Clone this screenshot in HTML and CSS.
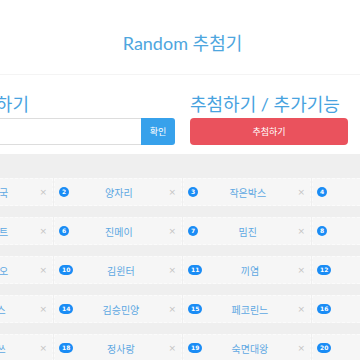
FILE: index.html
```html
<!DOCTYPE html>
<html lang="ko">
<head>
    <meta charset="UTF-8">
    <meta name="viewport" content="width=device-width, initial-scale=1.0">
    <title>Random 추첨기</title>
    <link rel="stylesheet" href="styles.css">
</head>
<body>

<div class="page">
    <header class="top">
        <h1>Random 추첨기</h1>
    </header>

    <div class="controls">
        <div class="col col-left">
            <h2>이름 입력하기</h2>
            <div class="input-group">
                <input type="text" id="nameInput">
                <button class="btn-ok">확인</button>
            </div>
        </div>
        <div class="col col-right">
            <h2>추첨하기 / 추가기능</h2>
            <button class="btn-draw">추첨하기</button>
        </div>
    </div>

    <div class="board">
        <div class="grid">
            <div class="card"><span class="num">1</span><span class="name">한나라국</span><span class="del">×</span></div>
            <div class="card"><span class="num">2</span><span class="name">양자리</span><span class="del">×</span></div>
            <div class="card"><span class="num">3</span><span class="name">작은박스</span><span class="del">×</span></div>
            <div class="card"><span class="num">4</span><span class="name">별사탕</span><span class="del">×</span></div>

            <div class="card"><span class="num">5</span><span class="name">도레미트</span><span class="del">×</span></div>
            <div class="card"><span class="num">6</span><span class="name">진메이</span><span class="del">×</span></div>
            <div class="card"><span class="num">7</span><span class="name">밈진</span><span class="del">×</span></div>
            <div class="card"><span class="num">8</span><span class="name">하루</span><span class="del">×</span></div>

            <div class="card"><span class="num">9</span><span class="name">라디오오</span><span class="del">×</span></div>
            <div class="card"><span class="num">10</span><span class="name">김윈터</span><span class="del">×</span></div>
            <div class="card"><span class="num">11</span><span class="name">끼염</span><span class="del">×</span></div>
            <div class="card"><span class="num">12</span><span class="name">초코칩</span><span class="del">×</span></div>

            <div class="card"><span class="num">13</span><span class="name">빅박스</span><span class="del">×</span></div>
            <div class="card"><span class="num">14</span><span class="name">김승민양</span><span class="del">×</span></div>
            <div class="card"><span class="num">15</span><span class="name">페코린느</span><span class="del">×</span></div>
            <div class="card"><span class="num">16</span><span class="name">달빛</span><span class="del">×</span></div>

            <div class="card"><span class="num">17</span><span class="name">아이쓰</span><span class="del">×</span></div>
            <div class="card"><span class="num">18</span><span class="name">정사랑</span><span class="del">×</span></div>
            <div class="card"><span class="num">19</span><span class="name">숙면대왕</span><span class="del">×</span></div>
            <div class="card"><span class="num">20</span><span class="name">구름</span><span class="del">×</span></div>
        </div>
    </div>
</div>

</body>
</html>
```

FILE: styles.css
```css
body {
    margin: 0;
    background-color: #ffffff;
    font-family: 'Lato', 'Noto Sans CJK KR', sans-serif;
    overflow: hidden;
}
.page {
    width: 515px;
    margin-left: -75px;
}
.top {
    padding: 33px 0 21px;
    border-bottom: 1px solid #f4f4f4;
    text-align: center;
}
h1 {
    margin: 0;
    font-size: 18px;
    line-height: 20px;
    font-weight: normal;
    color: #4ea6de;
}
.controls {
    display: flex;
    gap: 15px;
    padding: 17px 0 9px;
}
.col-left {
    width: 250px;
}
.col-right {
    width: 158px;
}
h2 {
    margin: 0 0 2px;
    font-size: 18px;
    line-height: 24px;
    font-weight: normal;
    color: #48a3df;
    white-space: nowrap;
}
.input-group {
    display: flex;
    height: 27px;
}
.input-group input {
    flex: 1;
    min-width: 0;
    margin: 0;
    padding: 0 8px;
    border: 1px solid #dddddd;
    border-right: none;
    border-radius: 3px 0 0 3px;
    outline: none;
}
.btn-ok {
    width: 34px;
    padding: 0;
    border: none;
    border-radius: 0 3px 3px 0;
    background-color: #37a1eb;
    color: #ffffff;
    font-family: 'Noto Sans CJK KR', sans-serif;
    font-size: 9px;
}
.btn-draw {
    display: block;
    width: 100%;
    height: 27px;
    padding: 0;
    border: none;
    border-radius: 4px;
    background-color: #ea525d;
    color: #ffffff;
    font-family: 'Noto Sans CJK KR', sans-serif;
    font-size: 9px;
}
.board {
    background-color: #efefef;
    padding: 24px 0 30px;
    min-height: 300px;
}
.grid {
    display: grid;
    grid-template-columns: repeat(4, 128px);
    column-gap: 1px;
    row-gap: 11px;
}
.card {
    display: flex;
    align-items: center;
    height: 28px;
    box-sizing: border-box;
    padding: 0 5px 0 4px;
    border: 1px dashed #fbfbfb;
    background-color: #f6f6f6;
}
.num {
    box-sizing: border-box;
    min-width: 10px;
    height: 10px;
    padding: 0 3px;
    border-radius: 5px;
    background-color: #1a8cf5;
    color: #ffffff;
    font-family: 'DejaVu Sans', sans-serif;
    font-size: 6px;
    font-weight: bold;
    line-height: 10px;
    text-align: center;
}
.name {
    flex: 1;
    text-align: center;
    font-family: 'Noto Sans CJK KR', sans-serif;
    font-size: 10px;
    color: #5ea8e2;
}
.del {
    font-family: 'DejaVu Sans', sans-serif;
    font-size: 9px;
    color: #c4c4c4;
}
```
